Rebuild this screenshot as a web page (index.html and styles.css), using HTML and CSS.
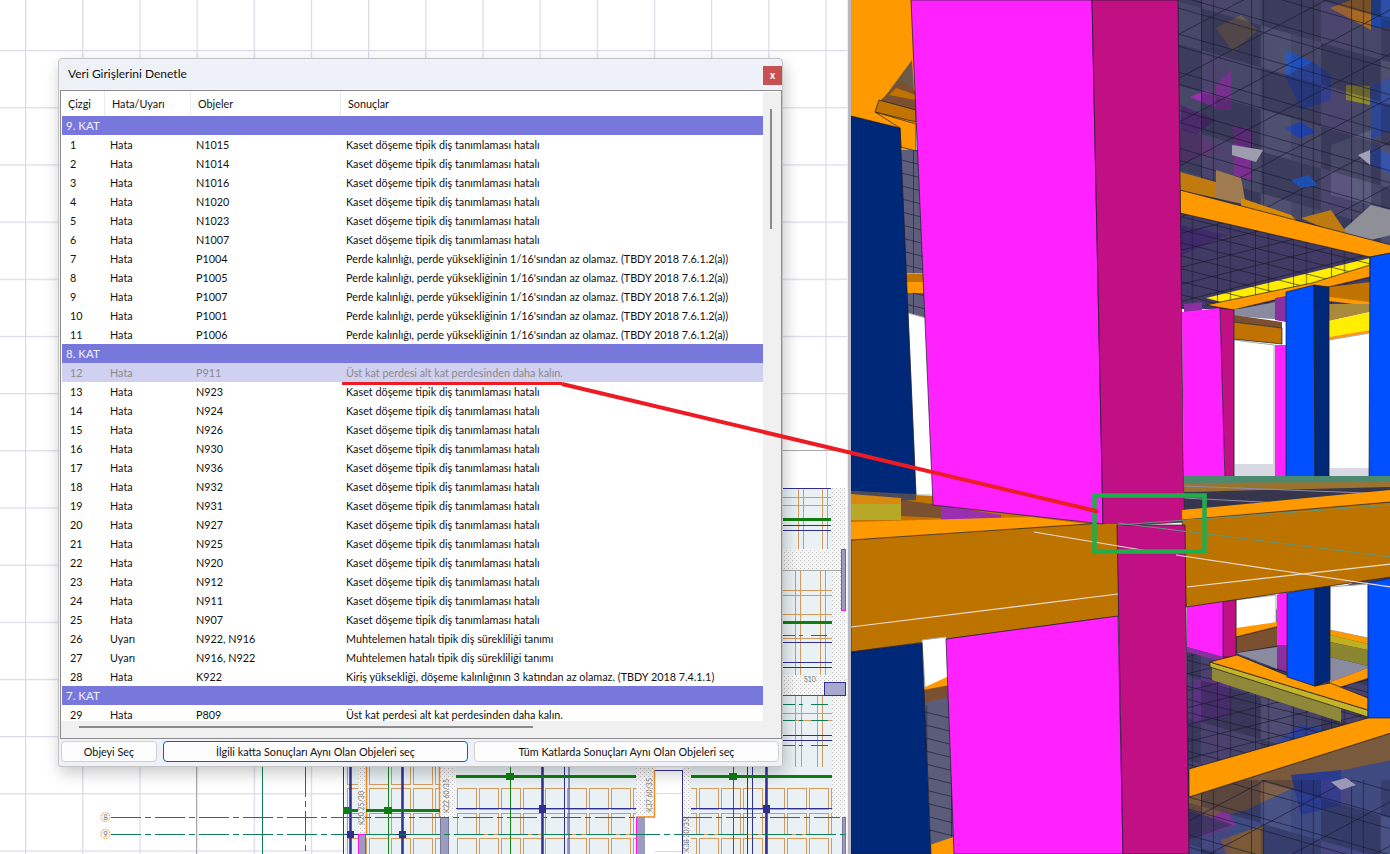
FILE: index.html
```html
<!DOCTYPE html>
<html lang="tr">
<head>
<meta charset="utf-8">
<title>Veri Girişlerini Denetle</title>
<link rel="stylesheet" href="styles.css">
</head>
<body>
<main class="desktop">
  <section class="cad">
    <svg class="cad-drawing" viewBox="0 0 848 854" width="848" height="854">
      <defs>
        <pattern id="grid" x="25" y="50" width="57.17" height="57.17" patternUnits="userSpaceOnUse">
          <path d="M0.5 0V58M0 0.5H58" class="grid-line"/>
        </pattern>
        <pattern id="hatch" width="4" height="4" patternUnits="userSpaceOnUse">
          <rect width="4" height="4" fill="#f6f6f6"/>
          <rect width="1" height="1" fill="#bcbcbc"/>
          <rect x="2" y="2" width="1" height="1" fill="#d0d0d0"/>
        </pattern>
        <pattern id="slab" x="456" y="788" width="22" height="25" patternUnits="userSpaceOnUse">
          <rect x="1.500" y=".5" width="19" height="21" class="rib"/>
        </pattern>
      </defs>
      <rect width="848" height="854" fill="#fff"/>
      <rect width="848" height="854" fill="url(#grid)"/>
      <rect x="783" y="451" width="65" height="37" fill="#fff"/>
      <path d="M826.500 451V488" class="grid-light"/>
      <path d="M196.500 767V854M783 450.500H846" class="axis-gray"/>

      <!-- strip to the right of the dialog -->
      <rect x="783" y="488" width="49" height="61" fill="#e9f1f4"/>
      <rect x="783" y="570" width="49" height="105" fill="#e9f1f4"/>
      <rect x="783" y="696" width="49" height="71" fill="#e9f1f4"/>
      <rect x="832" y="488" width="10" height="330" fill="url(#hatch)"/>
      <rect x="842" y="488" width="3" height="330" fill="url(#hatch)"/>
      <rect x="783" y="549" width="62" height="21" fill="url(#hatch)"/>
      <rect x="783" y="675" width="62" height="21" fill="url(#hatch)"/>
      <path d="M798.500 488V549M803.500 488V549M822.500 488V549M827.500 488V549M783 497.500H831M783 505.500H831" class="rib-line"/>
      <path d="M795.500 570V675M800.500 570V675M820.500 570V675M825.500 570V675M783 590.500H832M783 595.500H832M783 614.500H832M783 638.500H832" class="rib-line"/>
      <path d="M795.500 696V767M801.500 696V767M817.500 696V767M822.500 696V767M783 713.500H832M783 720.500H832" class="rib-line"/>
      <path d="M783 488.500H831M783 525.500H831M783 530.500H831M783 642.500H832M783 662.500H832M783 667.500H832M783 735.500H832M783 740.500H832" class="beam-thin"/>
      <path d="M783 519.500H831M783 622.500H832" class="green-thick"/>
      <path d="M783 635.500H827M783 704.500H828M783 720.500H828M783 745.500H828" class="green-dash"/>
      <path d="M783 570.500H841" class="axis-gray"/>
      <path d="M783 695.500H824" class="axis-green"/>
      <rect x="841.500" y="549.500" width="4" height="61" class="wall-pink"/>
      <rect x="824.500" y="682.500" width="21" height="13" class="wall-blue"/>
      <text x="804" y="682" class="cad-label">S10</text>

      <!-- floor plan below the dialog -->
      <rect x="345" y="767" width="95" height="87" fill="#e9f1f4"/>
      <rect x="456" y="767" width="180" height="87" fill="#e9f1f4"/>
      <rect x="691" y="767" width="141" height="87" fill="#e9f1f4"/>
      <rect x="345" y="767" width="95" height="87" fill="url(#slab)"/>
      <rect x="456" y="788" width="180" height="66" fill="url(#slab)"/>
      <rect x="691" y="788" width="141" height="66" fill="url(#slab)"/>
      <rect x="358" y="767" width="8" height="67" fill="url(#hatch)"/>
      <path d="M366.500 767V834" class="edge-orange"/>
      <rect x="440" y="767" width="16" height="50" fill="url(#hatch)"/>
      <path d="M439.500 767V817" class="edge-orange"/>
      <rect x="636" y="767" width="19" height="50" fill="url(#hatch)"/>
      <rect x="682" y="767" width="9" height="87" fill="url(#hatch)"/>
      <rect x="440" y="817" width="16" height="37" fill="#e9f1f4"/>
      <rect x="358.500" y="834.500" width="7" height="24" class="wall-pink"/>
      <rect x="440.500" y="817.500" width="8" height="40" class="wall-gray"/>
      <rect x="636.500" y="817.500" width="9" height="40" class="wall-pink"/>
      <rect x="645" y="817" width="10" height="37" fill="#fff"/>
      <rect x="655" y="770" width="27" height="84" fill="#fff"/>
      <path d="M655 770.500H682M682.500 770V854" class="beam-thin"/>
      <path d="M654.500 770V817H637" class="edge-orange"/>
      <path d="M655 793.500H682M655 851.500H682" class="grid-light"/>
      <rect x="832" y="767" width="13" height="51" fill="url(#hatch)"/>
      <rect x="832" y="818" width="10" height="36" fill="#e9f1f4"/>
      <rect x="842.500" y="817.500" width="3" height="40" class="wall-gray"/>
      <path d="M343.500 767V854M564.500 767V854M569 767V854M747.500 767V854M752.500 767V854" class="beam-thin"/>
      <path d="M350.500 767V854M402.500 767V854M542.500 767V854M766.500 767V854" class="beam-thick"/>
      <path d="M388.500 767V854M510.500 767V854M733.500 767V854" class="green-col"/>
      <path d="M343 810.500H358M366 810.500H440M456 776.500H636M691 776.500H832" class="green-thick"/>
      <rect x="343" y="807" width="7" height="7" fill="#0f7d12"/>
      <rect x="384" y="807" width="8" height="7" fill="#0f7d12"/>
      <rect x="506" y="773" width="8" height="7" fill="#0f7d12"/>
      <rect x="729" y="773" width="8" height="7" fill="#0f7d12"/>
      <rect x="539" y="805" width="7" height="8" fill="#2f2f90"/>
      <rect x="763" y="805" width="7" height="8" fill="#2f2f90"/>
      <rect x="347" y="831" width="7" height="7" fill="#2f2f90"/>
      <rect x="399" y="831" width="7" height="7" fill="#2f2f90"/>
      <path d="M456 808.500H636M691 808.500H832M343 834.500H358M366 834.500H440" class="beam-thin"/>
      <path d="M111 817.500H636M682 817.500H840M111 834.500H345M366 834.500H845" class="axis-dash"/>
      <path d="M262.500 767V854" class="axis-green"/>
      <path d="M305.500 767V854" class="axis-dash"/>
      <circle cx="105.500" cy="817" r="4.500" class="axis-bubble"/>
      <circle cx="105.500" cy="834" r="4.500" class="axis-bubble"/>
      <text x="105.500" y="820" class="axis-no">8</text>
      <text x="105.500" y="837" class="axis-no">9</text>
      <text transform="translate(364 825) rotate(-90)" class="cad-label">K20 25/30</text>
      <text transform="translate(449 813) rotate(-90)" class="cad-label">K22 60/35</text>
      <text transform="translate(652 812) rotate(-90)" class="cad-label">K37 60/35</text>
      <text transform="translate(689 852) rotate(-90)" class="cad-label">K38 30/35</text>
    </svg>
  </section>

  <section class="model">
    <svg class="model-view" viewBox="850 0 540 854" width="540" height="854">
      <defs>
        <pattern id="cells" width="120" height="84" patternUnits="userSpaceOnUse" patternTransform="skewY(16)">
          <rect width="60" height="42" fill="#20203c" fill-opacity=".35"/>
          <rect x="60" y="42" width="60" height="42" fill="#20203c" fill-opacity=".28"/>
          <rect x="60" width="30" height="42" fill="#8a8ab0" fill-opacity=".12"/>
          <rect y="42" width="30" height="42" fill="#5a3a80" fill-opacity=".22"/>
        </pattern>
        <pattern id="meshA" width="58" height="38" patternUnits="userSpaceOnUse" patternTransform="skewY(16)">
          <path d="M0 .5H58M0 12.500H58" class="mesh"/>
        </pattern>
        <pattern id="meshB" width="50" height="44" patternUnits="userSpaceOnUse" patternTransform="skewY(-28)">
          <path d="M.5 0V44M12.500 0V44M0 .5H50" class="mesh"/>
        </pattern>
        <pattern id="meshC" width="38" height="13" patternUnits="userSpaceOnUse" patternTransform="skewY(14)">
          <path d="M0 .5H38M.5 0V13M13.500 0V13" class="mesh"/>
        </pattern>
        <pattern id="meshD" width="46" height="17" patternUnits="userSpaceOnUse" patternTransform="skewY(-14)">
          <path d="M0 .5H46" class="mesh"/>
        </pattern>
      </defs>
      <rect x="850" width="540" height="854" fill="#fff"/>

      <!-- upper floor glass -->
      <rect x="1177" width="213" height="250" fill="#474868"/>
      <polygon points="1215,28 1240,15 1257,30 1232,52" fill="#6b5c50"/>
      <polygon points="1189,97 1206,90 1215,97 1215,108" fill="#9a30b0"/>
      <polygon points="1215,85 1230,70 1230,110 1215,110" fill="#7b2f90"/>
      <polygon points="1284,50 1312,62 1284,76" fill="#1e50b8"/>
      <polygon points="1284,76 1312,62 1330,75 1330,100 1300,110" fill="#2a3f90"/>
      <polygon points="1284,128 1300,122 1315,132 1298,138" fill="#1e40a8"/>
      <polygon points="1329,8 1370,30 1370,0 1350,0" fill="#a86a20"/>
      <rect x="1370" width="20" height="28" fill="#1f47a6"/>
      <polygon points="1370,85 1390,78 1390,130 1370,140" fill="#2c4796"/>
      <polygon points="1370,145 1390,155 1390,175 1370,165" fill="#2b4aa8"/>
      <polygon points="1345,85 1369,86 1369,105 1345,100" fill="#8f8a2b"/>
      <polygon points="1233,125 1250,130 1250,180 1233,175" fill="#7a2f90"/>
      <polygon points="1330,145 1370,130 1370,205 1330,195" fill="#5c5c7c"/>
      <polygon points="1180,105 1215,120 1195,135 1180,130" fill="#4b2a6a"/>
      <polygon points="1179,130 1200,135 1220,150 1180,165" fill="#5a3a70"/>
      <rect x="1177" width="213" height="250" fill="url(#cells)"/>
      <rect x="1177" width="213" height="250" fill="url(#meshA)"/>
      <rect x="1177" width="213" height="250" fill="url(#meshB)"/>
      <polygon points="1231,145 1262,150 1255,162 1231,155" fill="#9d9db0"/>
      <polygon points="1357,155 1369,150 1369,165" fill="#a0a0b8"/>
      <polygon points="1290,180 1308,175 1316,185 1300,188" fill="#1d4fb0"/>
      <polygon points="1370,205 1390,210 1390,235 1370,240 1340,232" fill="#8f8f98"/>
      <polygon points="1179,172 1215,182 1215,198 1179,190" fill="#c07a10"/>
      <polygon points="1215,170 1240,178 1245,205 1215,198" fill="#a07a50"/>
      <polygon points="1240,198 1290,215 1300,225 1240,212" fill="#d88a00"/>
      <polygon points="1300,218 1330,210 1345,232 1345,238" fill="#bd7a10"/>

      <!-- mid floor glass, yellow slab, beams -->
      <polygon points="1180,205 1369,250 1369,309 1180,309" fill="#403a64"/>
      <polygon points="1180,225 1225,235 1180,255" fill="#3f2a6a"/>
      <polygon points="1205,298 1369,258 1369,270 1232,305" fill="#ffee00"/>
      <polygon points="1180,205 1369,250 1369,309 1180,309" fill="url(#meshC)"/>
      <polygon points="1180,205 1369,250 1369,309 1180,309" fill="url(#meshD)"/>
      <polygon points="1179,190 1390,245 1390,253 1369,257 1179,213" fill="#ff9900" class="edge"/>
      <polygon points="1183,304 1201,302 1201,312 1183,314" fill="#8a2fa0"/>
      <polygon points="1205,305 1232,310 1369,277 1369,265 1311,283" fill="#ff9900" class="edge"/>
      <polygon points="1328,287 1369,282 1369,306 1328,300" fill="#c07300"/>
      <polygon points="1328,297 1369,302 1369,306 1328,301" fill="#ff9900"/>
      <polygon points="1328,304 1369,304 1369,312 1328,321" fill="#a88a3a"/>
      <polygon points="1328,321 1369,312 1369,330 1328,337" fill="#ffee00"/>
      <polygon points="1328,337 1369,330 1369,333 1328,340" fill="#ff9900"/>
      <polygon points="1233,340 1273,345 1273,476 1233,476" fill="#fff" class="edge-gray"/>
      <polygon points="1328,340 1369,333 1369,476 1328,476" fill="#fff" class="edge-gray"/>
      <rect x="1234" y="464" width="39" height="12" fill="#d9d9e3"/>
      <rect x="1329" y="468" width="39" height="8" fill="#d9d9e3"/>
      <polygon points="1232,310 1285,300 1285,320 1232,316" fill="#8a8aa0"/>
      <polygon points="1274,298 1285,296 1285,322 1274,320" fill="#8a2fa0"/>
      <polygon points="1232,315 1281,322 1281,328 1232,322" fill="#7a5030"/>
      <polygon points="1232,322 1281,328 1281,344 1232,339" fill="#c07300" class="edge"/>
      <polygon points="1181,312 1219,308 1224,480 1183,480" fill="#ff22ff"/>
      <polygon points="1219,308 1233,310 1233,480 1224,480" fill="#c01084" class="edge"/>
      <polygon points="1274,345 1285,345 1285,480 1274,480" fill="#ff22ff"/>
      <polygon points="1285,292 1313,285 1314,482 1285,482" fill="#0050ff" class="edge"/>
      <polygon points="1313,285 1328,287 1328,482 1314,482" fill="#002878" class="edge"/>
      <polygon points="1369,257 1390,253 1390,482 1368,482" fill="#0050ff" class="edge"/>

      <!-- floor band behind the column -->
      <polygon points="1183,476 1390,478 1390,490 1183,492" fill="#9a7330"/>
      <polygon points="1183,476 1390,476 1390,482 1183,483" fill="#4c8a70"/>
      <polygon points="1183,492 1390,487 1390,503 1183,510" fill="#35354e"/>
      <path d="M1183 498L1300 504M1183 486L1390 494" class="line-muted"/>

      <!-- lower floors -->
      <polygon points="1186,640 1390,570 1390,854 1186,854" fill="#45436a"/>
      <polygon points="1190,680 1230,675 1230,715 1190,725" fill="#5a3380"/>
      <polygon points="1270,745 1300,725 1330,730 1300,750" fill="#2a3f98"/>
      <rect x="1186" y="650" width="204" height="130" fill="url(#cells)"/>
      <rect x="1186" y="650" width="204" height="130" fill="url(#meshC)"/>
      <rect x="1186" y="650" width="204" height="130" fill="url(#meshD)"/>
      <polygon points="1211,667 1340,708 1340,722 1211,680" fill="#8f8838"/>
      <polygon points="1209,662 1209,667 1367,717 1367,710" fill="#c4b428" class="edge"/>
      <polygon points="1235,600 1275,595 1275,627 1235,633" fill="#fff" class="edge-gray"/>
      <polygon points="1235,628 1283,621 1283,626 1235,637" fill="#ff9900"/>
      <polygon points="1235,637 1283,625 1283,645 1235,653" fill="#7a5030" class="edge"/>
      <polygon points="1235,653 1276,647 1276,669" fill="#8a8aa0"/>
      <polygon points="1186,607 1222,600 1222,657 1186,647" fill="#ff22ff"/>
      <polygon points="1186,647 1222,657 1222,662 1186,652" fill="#8a2fa0"/>
      <polygon points="1222,600 1235,598 1235,657 1222,657" fill="#c01084" class="edge"/>
      <polygon points="1276,595 1286,590 1286,650 1276,650" fill="#ff22ff"/>
      <polygon points="1276,645 1286,645 1286,672 1276,668" fill="#8a2fa0"/>
      <polygon points="1329,587 1367,584 1367,638 1329,630" fill="#fff" class="edge-gray"/>
      <polygon points="1329,630 1367,638 1367,644 1329,635" fill="#ff9900"/>
      <polygon points="1329,635 1367,644 1367,650 1329,642" fill="#c0b020"/>
      <polygon points="1329,642 1367,650 1367,666 1329,657" fill="#8a8530"/>
      <polygon points="1329,657 1367,666 1367,668 1329,682" fill="#8a8aa0"/>
      <polygon points="1329,682 1367,668 1367,678 1329,690" fill="#ff9900"/>
      <polygon points="1209,662 1236,655 1290,677 1314,686 1329,683 1367,698 1367,710" fill="#ff9900" class="edge"/>
      <polygon points="1286,593 1314,588 1314,686 1286,677" fill="#0050ff" class="edge"/>
      <polygon points="1314,588 1329,586 1329,680 1314,686" fill="#002878" class="edge"/>
      <polygon points="1367,583 1390,578 1390,724 1367,718" fill="#0050ff" class="edge"/>

      <!-- bottom right, under the orange beam -->
      <polygon points="1188,797 1390,733 1390,762 1300,800 1230,825 1188,810" fill="#7a5a3c"/>
      <polygon points="1188,825 1245,810 1320,775 1390,760 1390,854 1188,854" fill="#3f4a80"/>
      <polygon points="1290,775 1340,770 1340,805 1300,815" fill="#2a3c90"/>
      <polygon points="1220,840 1262,825 1262,854 1225,854" fill="#7b5a38"/>
      <polygon points="1195,825 1225,810 1235,825 1205,835" fill="#8a2fa0"/>
      <polygon points="1188,810 1232,825 1188,840" fill="#3d3360"/>
      <rect x="1188" y="780" width="202" height="74" fill="url(#cells)"/>
      <rect x="1188" y="780" width="202" height="74" fill="url(#meshA)"/>
      <rect x="1188" y="780" width="202" height="74" fill="url(#meshB)"/>
      <polygon points="1330,782 1345,778 1355,785 1340,790" fill="#9a9ab8"/>
      <polygon points="1188,769 1367,718 1390,718 1390,733 1188,797" fill="#ff9900" class="edge"/>

      <!-- left side -->
      <rect x="850" width="65" height="150" fill="#ff9900"/>
      <polygon points="911,60 874,110 915,122" fill="#6a5a4a"/>
      <polygon points="900,80 880,100 915,110 915,92" fill="#7a5030"/>
      <polygon points="895,88 915,95 915,100 888,95" fill="#c07300"/>
      <polygon points="874,112 915,124 915,151 900,147 899,128" fill="#ff9900" class="edge"/>
      <polygon points="878,100 915,110 915,122 874,112" fill="#c07300" class="edge"/>
      <polygon points="900,150 925,150 925,320 900,320" fill="#5e5e7c"/>
      <rect x="900" y="150" width="25" height="170" fill="url(#meshC)"/>
      <rect x="905" y="273" width="20" height="20" fill="#ff9900"/>
      <rect x="905" y="274" width="20" height="8" fill="#c07300"/>
      <polygon points="907,313 925,318 933,495 915,495" fill="#fff" class="edge-gray"/>
      <polygon points="850,116 899,128 915,495 850,495" fill="#002878" class="edge"/>

      <polygon points="850,491 945,497 1102,525 850,525" fill="#c07300"/>
      <polygon points="850,504 900,504 900,520 850,520" fill="#b8a828"/>
      <polygon points="900,500 940,505 940,518 900,516" fill="#7a5030"/>
      <polygon points="850,491 915,494 915,500 850,504" fill="#4a4a58"/>
      <polygon points="850,494 900,498 900,504 850,504" fill="#d88a10"/>
      <polygon points="940,505 1000,515 1000,530 940,520" fill="#9a30b0"/>
      <polygon points="850,522 1030,517 1102,526 1030,528 850,540" fill="#ff9900"/>
      <polygon points="850,540 1102,523 1117,523 1118,616 850,652" fill="#bd7300" class="edge"/>

      <polygon points="910,0 1091,0 1102,524 932,505" fill="#ff22ff" class="edge"/>
      <polygon points="1091,0 1177,0 1183,522 1117,526 1102,524" fill="#c01084" class="edge"/>
      <polygon points="1181,510 1390,490 1390,502 1181,522" fill="#ff9900"/>
      <polygon points="1181,520 1390,502 1390,577 1185,607" fill="#bd7300" class="edge"/>
      <rect x="1102" y="524" width="15" height="94" fill="#bd7300"/>

      <polygon points="921,640 945,637 950,682 924,688" fill="#fff" class="edge-gray"/>
      <polygon points="922,688 948,676 949,685 922,695" fill="#ff9900"/>
      <polygon points="922,690 949,685 950,697 923,705" fill="#7a5030"/>
      <polygon points="923,703 955,695 955,850 930,850" fill="#5b5b7a"/>
      <rect x="923" y="705" width="32" height="135" fill="url(#meshC)"/>
      <polygon points="929,845 955,836 955,854 930,854" fill="#ff9900"/>
      <polygon points="850,652 921,643 930,854 850,854" fill="#002878" class="edge"/>
      <polygon points="945,639 1117,616 1122,854 953,854" fill="#ff22ff" class="edge"/>
      <polygon points="1116,525 1184,525 1188,854 1122,854" fill="#c01084" class="edge"/>

      <path d="M1117 525L1390 505M1117 523L1390 557" class="line-green"/>
      <path d="M1033 532L1147 551M1175 555L1390 587M850 627L1117 594M1186 587L1390 564" class="line-white"/>
      <rect x="1093.500" y="495.500" width="110" height="56" class="focus-box"/>
    </svg>
  </section>

  <svg class="callout" viewBox="0 0 1390 854" width="1390" height="854" aria-hidden="true">
    <path d="M342 383.500H562" class="callout-line"/>
    <path d="M562 384L1098 511.500" class="callout-line callout-long"/>
  </svg>

  <section class="dialog">
    <header class="titlebar">
      <h1 class="title">Veri Girişlerini Denetle</h1>
      <button class="close" type="button">x</button>
    </header>
    <div class="list">
      <div class="list-main">
        <div class="row head"><span>Çizgi</span><span>Hata/Uyarı</span><span>Objeler</span><span>Sonuçlar</span></div>
        <div class="group">9. KAT</div>
        <div class="row"><span>1</span><span>Hata</span><span>N1015</span><span>Kaset döşeme tipik diş tanımlaması hatalı</span></div>
        <div class="row"><span>2</span><span>Hata</span><span>N1014</span><span>Kaset döşeme tipik diş tanımlaması hatalı</span></div>
        <div class="row"><span>3</span><span>Hata</span><span>N1016</span><span>Kaset döşeme tipik diş tanımlaması hatalı</span></div>
        <div class="row"><span>4</span><span>Hata</span><span>N1020</span><span>Kaset döşeme tipik diş tanımlaması hatalı</span></div>
        <div class="row"><span>5</span><span>Hata</span><span>N1023</span><span>Kaset döşeme tipik diş tanımlaması hatalı</span></div>
        <div class="row"><span>6</span><span>Hata</span><span>N1007</span><span>Kaset döşeme tipik diş tanımlaması hatalı</span></div>
        <div class="row"><span>7</span><span>Hata</span><span>P1004</span><span>Perde kalınlığı, perde yüksekliğinin 1/16'sından az olamaz. (TBDY 2018 7.6.1.2(a))</span></div>
        <div class="row"><span>8</span><span>Hata</span><span>P1005</span><span>Perde kalınlığı, perde yüksekliğinin 1/16'sından az olamaz. (TBDY 2018 7.6.1.2(a))</span></div>
        <div class="row"><span>9</span><span>Hata</span><span>P1007</span><span>Perde kalınlığı, perde yüksekliğinin 1/16'sından az olamaz. (TBDY 2018 7.6.1.2(a))</span></div>
        <div class="row"><span>10</span><span>Hata</span><span>P1001</span><span>Perde kalınlığı, perde yüksekliğinin 1/16'sından az olamaz. (TBDY 2018 7.6.1.2(a))</span></div>
        <div class="row"><span>11</span><span>Hata</span><span>P1006</span><span>Perde kalınlığı, perde yüksekliğinin 1/16'sından az olamaz. (TBDY 2018 7.6.1.2(a))</span></div>
        <div class="group">8. KAT</div>
        <div class="row selected"><span>12</span><span>Hata</span><span>P911</span><span>Üst kat perdesi alt kat perdesinden daha kalın.</span></div>
        <div class="row"><span>13</span><span>Hata</span><span>N923</span><span>Kaset döşeme tipik diş tanımlaması hatalı</span></div>
        <div class="row"><span>14</span><span>Hata</span><span>N924</span><span>Kaset döşeme tipik diş tanımlaması hatalı</span></div>
        <div class="row"><span>15</span><span>Hata</span><span>N926</span><span>Kaset döşeme tipik diş tanımlaması hatalı</span></div>
        <div class="row"><span>16</span><span>Hata</span><span>N930</span><span>Kaset döşeme tipik diş tanımlaması hatalı</span></div>
        <div class="row"><span>17</span><span>Hata</span><span>N936</span><span>Kaset döşeme tipik diş tanımlaması hatalı</span></div>
        <div class="row"><span>18</span><span>Hata</span><span>N932</span><span>Kaset döşeme tipik diş tanımlaması hatalı</span></div>
        <div class="row"><span>19</span><span>Hata</span><span>N931</span><span>Kaset döşeme tipik diş tanımlaması hatalı</span></div>
        <div class="row"><span>20</span><span>Hata</span><span>N927</span><span>Kaset döşeme tipik diş tanımlaması hatalı</span></div>
        <div class="row"><span>21</span><span>Hata</span><span>N925</span><span>Kaset döşeme tipik diş tanımlaması hatalı</span></div>
        <div class="row"><span>22</span><span>Hata</span><span>N920</span><span>Kaset döşeme tipik diş tanımlaması hatalı</span></div>
        <div class="row"><span>23</span><span>Hata</span><span>N912</span><span>Kaset döşeme tipik diş tanımlaması hatalı</span></div>
        <div class="row"><span>24</span><span>Hata</span><span>N911</span><span>Kaset döşeme tipik diş tanımlaması hatalı</span></div>
        <div class="row"><span>25</span><span>Hata</span><span>N907</span><span>Kaset döşeme tipik diş tanımlaması hatalı</span></div>
        <div class="row"><span>26</span><span>Uyarı</span><span>N922, N916</span><span>Muhtelemen hatalı tipik diş sürekliliği tanımı</span></div>
        <div class="row"><span>27</span><span>Uyarı</span><span>N916, N922</span><span>Muhtelemen hatalı tipik diş sürekliliği tanımı</span></div>
        <div class="row"><span>28</span><span>Hata</span><span>K922</span><span>Kiriş yüksekliği, döşeme kalınlığının 3 katından az olamaz. (TBDY 2018 7.4.1.1)</span></div>
        <div class="group">7. KAT</div>
        <div class="row"><span>29</span><span>Hata</span><span>P809</span><span>Üst kat perdesi alt kat perdesinden daha kalın.</span></div>
      </div>
      <div class="vscroll"><div class="vthumb"></div></div>
      <div class="hscroll"><div class="hthumb"></div></div>
    </div>
    <footer class="actions">
      <button class="btn btn-one" type="button">Objeyi Seç</button>
      <button class="btn btn-wide btn-default" type="button">İlgili katta Sonuçları Aynı Olan Objeleri seç</button>
      <button class="btn btn-wide" type="button">Tüm Katlarda Sonuçları Aynı Olan Objeleri seç</button>
    </footer>
  </section>
</main>
</body>
</html>
```
FILE: styles.css
```css
* { box-sizing: border-box; }
html, body { margin: 0; height: 100%; overflow: hidden; }
body { font-family: Lato, "Liberation Sans", sans-serif; color: #111; background: #fff; }

.desktop { position: relative; display: flex; width: 1390px; height: 854px; overflow: hidden; }
.cad { flex: 0 0 850px; height: 854px; border-right: 3px solid #b9b9bf; background: #fff; position: relative; }
.cad::after { content: ""; position: absolute; top: 0; bottom: 0; right: 0; width: 1px; background: #eeeeee; }
.cad-drawing, .model-view { display: block; }
.model { flex: 1; height: 854px; }

.grid-line { stroke: #dcd9e9; stroke-width: 1.5; fill: none; }
.grid-light { stroke: #dcd9e9; stroke-width: 1; fill: none; }
.rib { stroke: #d39a5e; stroke-width: 1; fill: none; }
.rib-line { stroke: #d39a5e; stroke-width: 1; fill: none; }
.axis-gray { stroke: #a8a8a8; stroke-width: 1; fill: none; }
.axis-green { stroke: #0e7d58; stroke-width: 1; fill: none; }
.axis-dash { stroke: #0e7d58; stroke-width: 1; stroke-dasharray: 30 4 6 4; fill: none; }
.green-dash { stroke: #0e7d58; stroke-width: 1; stroke-dasharray: 12 4 4 8 20 4; fill: none; }
.green-col { stroke: #128212; stroke-width: 1; fill: none; }
.green-thick { stroke: #0f7d12; stroke-width: 3; fill: none; }
.beam-thin { stroke: #2f2f90; stroke-width: 1; fill: none; }
.beam-thick { stroke: #2f2f90; stroke-width: 2.5; fill: none; }
.edge-orange { stroke: #f08a24; stroke-width: 1.5; fill: none; }
.wall-pink { fill: #9c9cc0; stroke: #ff10e0; stroke-width: 1; }
.wall-gray { fill: #9c9cc0; stroke: #77779f; stroke-width: 1; }
.wall-blue { fill: #a9a9cf; stroke: #2f2f90; stroke-width: 1; }
.axis-bubble { fill: #fff; stroke: #f0801c; stroke-width: 1; stroke-dasharray: 1.500 1; }
.axis-no { font-size: 8px; text-anchor: middle; fill: #6a6a6a; }
.cad-label { font-size: 7px; fill: #777; }

.edge { stroke: #1a1a2a; stroke-width: .7; }
.edge-gray { stroke: #a8a8a8; stroke-width: 1; }
.mesh { stroke: #15152a; stroke-opacity: .65; stroke-width: .9; fill: none; }
.line-muted { stroke: #8d8da8; stroke-width: 1; fill: none; }
.line-green { stroke: #5d9680; stroke-width: 1; fill: none; }
.line-white { stroke: #e9dcd4; stroke-width: 1.2; fill: none; }
.focus-box { fill: none; stroke: #22ad4c; stroke-width: 4.500; }

.callout { position: absolute; left: 0; top: 0; pointer-events: none; z-index: 3; }
.callout-line { fill: none; stroke: #ed1c24; stroke-width: 3; }
.callout-long { stroke-width: 4; }

.dialog {
  position: absolute; left: 58px; top: 58px; z-index: 2;
  width: 725px; height: 709px;
  display: flex; flex-direction: column;
  background: #eef1f8;
  border: 1px solid #c4c4c4; border-radius: 4px 4px 3px 3px;
  box-shadow: 2px 6px 16px rgba(0, 0, 0, .22);
}
.titlebar { flex: 0 0 31px; display: flex; justify-content: space-between; padding: 6px 0 0 9px; }
.title { margin: 0; font-size: 12px; font-weight: 400; line-height: 18px; color: #111; }
.close { width: 19px; height: 19px; margin-top: 1px; padding: 0; border: 0; background: #c75050; color: #fff; font: 700 10px/17px "Liberation Sans", sans-serif; }

.list {
  flex: 1; min-height: 0; margin: 0 0 0 1px;
  display: grid; grid-template-columns: 1fr 18px; grid-template-rows: 1fr 17px;
  background: #fff; border: 1px solid #8c8c8c;
  box-shadow: inset 0 0 0 1px #fff;
}
.list-main { overflow: hidden; padding-left: 1px; min-width: 0; }
.row { display: grid; grid-template-columns: 43px 86px 150px 1fr; height: 19px; font-size: 10.800px; line-height: 20px; white-space: nowrap; }
.row > span { padding-left: 5px; overflow: hidden; }
.row > span:first-child { padding-left: 8px; }
.head { height: 25px; line-height: 26px; margin-left: -2px; grid-template-columns: 45px 86px 150px 1fr; }
.head > span { padding-left: 7px; border-right: 1px solid #e9e9ee; }
.head > span:first-child { padding-left: 8px; }
.head > span:last-child { border-right: 0; }
.group { height: 19px; padding-left: 4px; font-size: 11.500px; line-height: 20px; color: #f2f2fb; background: #7878dc; }
.selected { background: #d0d0f0; color: #8b8b8b; }

.vscroll { grid-row: 1 / 3; grid-column: 2; background: #f0f0f0; padding: 17px 0 0 7px; border-top: 1px solid #fff; }
.vthumb { width: 2px; height: 120px; background: #8a8a8a; }
.hscroll { grid-row: 2; grid-column: 1; background: #f0f0f0; padding: 5px 0 0 18px; }
.hthumb { width: 454px; height: 2px; background: #8a8a8a; }

.actions { flex: 0 0 27px; display: flex; gap: 6px; padding: 2px 3px 4px 2px; }
.btn { height: 21px; padding: 0; border: 1px solid #d0d0d0; border-radius: 4px; background: #fdfdfd; color: #111; font: 400 10.800px/17px Lato, "Liberation Sans", sans-serif; white-space: nowrap; }
.btn-one { flex: 0 0 96px; }
.btn-wide { flex: 0 0 305px; }
.btn-default { border: 1.500px solid #0067c0; }
```
